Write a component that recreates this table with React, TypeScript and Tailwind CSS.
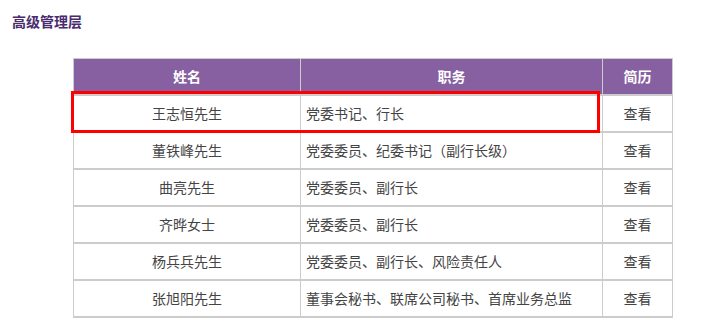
import React from 'react'

const rows = [
  { name: '王志恒先生', title: '党委书记、行长' },
  { name: '董铁峰先生', title: '党委委员、纪委书记（副行长级）' },
  { name: '曲亮先生', title: '党委委员、副行长' },
  { name: '齐晔女士', title: '党委委员、副行长' },
  { name: '杨兵兵先生', title: '党委委员、副行长、风险责任人' },
  { name: '张旭阳先生', title: '董事会秘书、联席公司秘书、首席业务总监' },
]

export default function App() {
  return (
    <div className="relative h-[333px] w-[720px] bg-white text-[14px] text-[#444]" style={{ fontFamily: '"Microsoft YaHei", "Noto Sans CJK SC", sans-serif' }}>
      <div className="pl-[12px] pt-[11px] text-[14px] font-bold leading-[20px] text-[#4a2c6e]">高级管理层</div>
      <div className="pl-[73px] pt-[27px]">
        <table className="w-[600px] border-collapse border border-[#cccccc]">
          <thead>
            <tr className="h-[36px] bg-[#8660a1] text-white">
              <th className="w-[227px] border-r border-b-2 border-[#cccccc] font-bold">姓名</th>
              <th className="w-[302px] border-r border-b-2 border-[#cccccc] font-bold">职务</th>
              <th className="border-b-2 border-[#cccccc] font-bold">简历</th>
            </tr>
          </thead>
          <tbody>
            {rows.map((r) => (
              <tr key={r.name} className="h-[37px]">
                <td className="border-r border-b-2 border-[#cccccc] text-center">{r.name}</td>
                <td className="border-r border-b-2 border-[#cccccc] pl-[5px]">{r.title}</td>
                <td className="border-b-2 border-[#cccccc] text-center">查看</td>
              </tr>
            ))}
          </tbody>
        </table>
      </div>
      <div className="absolute left-[71px] top-[91px] h-[42px] w-[529px] border-[3px] border-[#ff0000]" />
    </div>
  )
}
